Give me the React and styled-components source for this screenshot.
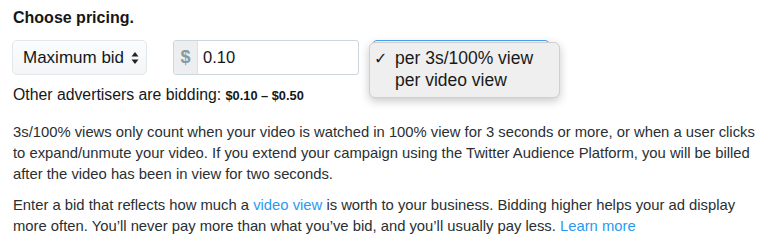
import React from 'react';
import styled, { createGlobalStyle } from 'styled-components';

const Global = createGlobalStyle`
  html, body {
    margin: 0;
    padding: 0;
    background: #fff;
  }
  body {
    font-family: "Liberation Sans", Arial, sans-serif;
    color: #292f33;
  }
`;

const Page = styled.div`
  padding: 9px 4px 0 13px;
  width: 753px;
`;

const Heading = styled.div`
  font-size: 16px;
  font-weight: bold;
  line-height: 18px;
  color: #14171a;
`;

const ControlRow = styled.div`
  display: flex;
  align-items: flex-start;
  margin-top: 13px;
  margin-left: -1px;
`;

const SelectButton = styled.div`
  display: flex;
  align-items: center;
  justify-content: space-between;
  box-sizing: border-box;
  width: ${(p) => p.$width}px;
  height: 35px;
  padding: 0 7px 0 10px;
  border: 1px solid ${(p) => (p.$focused ? '#4aa3f0' : '#e1e8ed')};
  border-radius: 5px;
  background: linear-gradient(#fbfcfd, #f3f5f7);
  font-size: 17px;
  color: #14171a;
`;

const InputGroup = styled.div`
  display: flex;
  box-sizing: border-box;
  width: 186px;
  height: 35px;
  margin-left: 26px;
  border: 1px solid #ccd6dd;
  border-radius: 3px;
  overflow: hidden;
`;

const Addon = styled.div`
  display: flex;
  align-items: center;
  justify-content: center;
  width: 23px;
  background: #eceef0;
  border-right: 1px solid #dde2e6;
  font-size: 18px;
  font-weight: bold;
  color: #8899a6;
`;

const Value = styled.div`
  display: flex;
  align-items: center;
  padding-left: 5px;
  font-size: 16.5px;
  color: #14171a;
`;

const MenuAnchor = styled.div`
  position: relative;
  margin-left: 13px;
`;

const Menu = styled.div`
  position: absolute;
  left: -3px;
  top: 2px;
  box-sizing: border-box;
  width: 191px;
  padding: 5px 0 6px;
  background: #efefef;
  border: 1px solid #cfcfcf;
  border-radius: 6px;
  box-shadow: 0 3px 10px rgba(0, 0, 0, 0.22);
`;

const MenuItem = styled.div`
  display: flex;
  align-items: center;
  height: 21.5px;
  font-size: 17.5px;
  color: #1a1a1a;
`;

const Check = styled.span`
  display: inline-block;
  width: 25px;
  padding-left: 4px;
  box-sizing: border-box;
  font-size: 16px;
  font-weight: bold;
  font-family: "DejaVu Sans", sans-serif;
`;

const Helper = styled.div`
  margin-top: 11px;
  font-size: 15.8px;
  line-height: 18px;
  color: #14171a;

  b {
    font-size: 12.8px;
  }
`;

const Paragraph = styled.p`
  margin: ${(p) => p.$top}px 0 0;
  font-size: 14.8px;
  line-height: 21px;
  color: #292f33;
`;

const Link = styled.a`
  color: #2a9af0;
  text-decoration: none;
`;

function UpDown() {
  return (
    <svg width="8" height="14" viewBox="0 0 8 14">
      <path d="M4 1 L7.5 5.5 H0.5 Z" fill="#222" />
      <path d="M4 13 L7.5 8.5 H0.5 Z" fill="#222" />
    </svg>
  );
}

export default function App() {
  return (
    <>
      <Global />
      <Page>
        <Heading>Choose pricing.</Heading>
        <ControlRow>
          <SelectButton $width={135}>
            <span>Maximum bid</span>
            <UpDown />
          </SelectButton>
          <InputGroup>
            <Addon>$</Addon>
            <Value>0.10</Value>
          </InputGroup>
          <MenuAnchor>
            <SelectButton $width={178} $focused>
              <span />
            </SelectButton>
            <Menu>
              <MenuItem>
                <Check>✓</Check>per 3s/100% view
              </MenuItem>
              <MenuItem>
                <Check />per video view
              </MenuItem>
            </Menu>
          </MenuAnchor>
        </ControlRow>
        <Helper>
          Other advertisers are bidding: <b>$0.10 – $0.50</b>
        </Helper>
        <Paragraph $top={17}>
          3s/100% views only count when your video is watched in 100% view for 3 seconds or more, or when a user clicks
          to expand/unmute your video. If you extend your campaign using the Twitter Audience Platform, you will be billed
          after the video has been in view for two seconds.
        </Paragraph>
        <Paragraph $top={10}>
          Enter a bid that reflects how much a <Link href="#">video view</Link> is worth to your business. Bidding higher
          helps your ad display more often. You’ll never pay more than what you’ve bid, and you’ll usually pay less.{' '}
          <Link href="#">Learn more</Link>
        </Paragraph>
      </Page>
    </>
  );
}
